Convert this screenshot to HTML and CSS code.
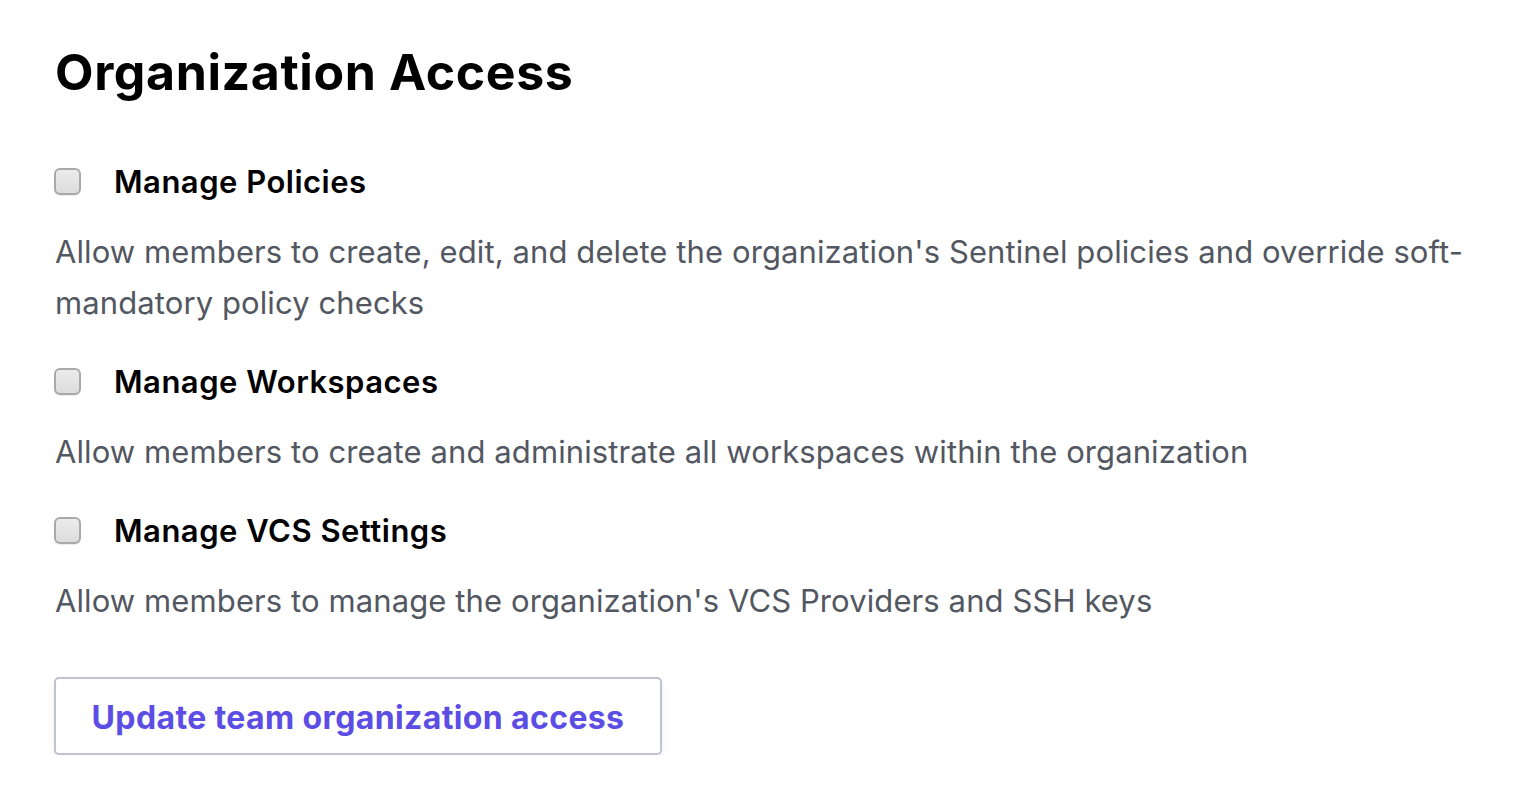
FILE: index.html
```html
<!DOCTYPE html>
<html>
<head>
<meta charset="utf-8">
<link rel="stylesheet" href="styles.css">
</head>
<body>
<div class="page">
  <h1 class="title">Organization Access</h1>
  <div class="perm">
    <label class="perm-label"><span class="check"></span><span>Manage Policies</span></label>
    <p class="perm-desc">Allow members to create, edit, and delete the organization's Sentinel policies and override soft-mandatory policy checks</p>
  </div>
  <div class="perm">
    <label class="perm-label"><span class="check"></span><span>Manage Workspaces</span></label>
    <p class="perm-desc">Allow members to create and administrate all workspaces within the organization</p>
  </div>
  <div class="perm">
    <label class="perm-label"><span class="check"></span><span>Manage VCS Settings</span></label>
    <p class="perm-desc">Allow members to manage the organization's VCS Providers and SSH keys</p>
  </div>
  <button class="btn">Update team organization access</button>
</div>
</body>
</html>
```
FILE: styles.css
```css
html, body {
  margin: 0;
  padding: 0;
  background: #ffffff;
}
body {
  font-family: Inter, "Noto Sans", sans-serif;
}
.page {
  padding: 42px 55px 0 55px;
  width: 1420px;
}
.title {
  margin: 0;
  font-size: 50px;
  line-height: 60px;
  font-weight: 700;
  color: #000;
  letter-spacing: 0.6px;
}
.perm {
  margin-top: 54px;
}
.perm + .perm {
  margin-top: 28px;
}
.perm-label {
  display: flex;
  align-items: center;
  height: 50px;
  font-size: 31px;
  font-weight: 600;
  color: #000;
  letter-spacing: 0.5px;
}
.check {
  width: 23px;
  height: 23px;
  margin-left: -1px;
  margin-right: 33px;
  border: 2px solid #a9a9a9;
  border-radius: 6px;
  background: linear-gradient(#ececec, #dcdcdc);
  box-shadow: 0 1px 0 rgba(0,0,0,0.08);
  flex: none;
}
.perm-desc {
  margin: 20px 0 0 0;
  font-size: 31px;
  line-height: 51px;
  color: #525761;
  letter-spacing: 0.1px;
}
.btn {
  display: block;
  margin-top: 51px;
  margin-left: -1px;
  width: 608px;
  height: 78px;
  background: #fff;
  border: 2px solid #bfc3cf;
  border-radius: 5px;
  box-shadow: 0 4px 6px rgba(0,0,0,0.07);
  font-family: Inter, "Noto Sans", sans-serif;
  font-size: 32px;
  font-weight: 700;
  color: #5c4ee5;
  letter-spacing: 0.37px;
  padding: 3px 0 0 0;
}
```
